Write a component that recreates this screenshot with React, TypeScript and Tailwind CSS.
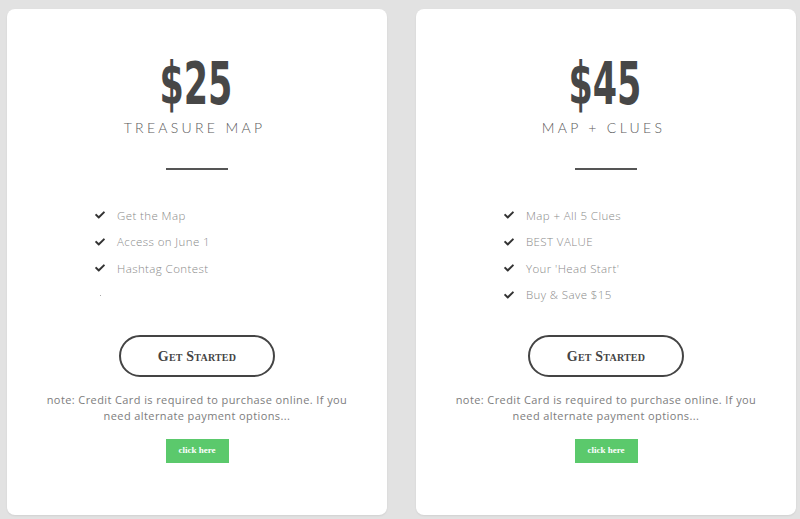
import React from 'react';
import { FaCheck } from 'react-icons/fa';

interface Plan {
  price: string;
  name: string;
  features: string[];
}

const plans: Plan[] = [
  { price: '$25', name: 'TREASURE MAP', features: ['Get the Map', 'Access on June 1', 'Hashtag Contest', ''] },
  { price: '$45', name: 'MAP + CLUES', features: ['Map + All 5 Clues', 'BEST VALUE', "Your 'Head Start'", 'Buy & Save $15'] },
];

function PlanCard({ plan }: { plan: Plan }) {
  return (
    <div className="w-[380px] h-[506px] shrink-0 bg-white rounded-[8px] shadow-[0_1px_2px_rgba(0,0,0,0.08)] flex flex-col items-center pt-[46px]">
      {/* price */}
      <div className="text-[58px] leading-[58px] font-bold text-[#474747] scale-x-[0.67] pr-[3px] font-['DejaVu_Sans_Condensed',sans-serif]">
        {plan.price}
      </div>
      <div className="mt-[7px] text-[14px] leading-[16px] font-light tracking-[3.3px] pr-[5px] text-[#5a5a5a] font-['Lato',sans-serif]">
        {plan.name}
      </div>
      <div className="mt-[32px] w-[62px] h-[2px] bg-[#555]" />

      <ul className="mt-[32px] self-stretch pl-[88px]">
        {plan.features.map((f, i) => (
          <li key={i} className="h-[26.5px] flex items-center gap-[12px]">
            {f ? (
              <FaCheck className="w-[10px] h-[10px] text-[#333]" />
            ) : (
              <span className="w-[10px] flex justify-center">
                <span className="w-[1px] h-[1px] bg-[#aaa] mt-[2px]" />
              </span>
            )}
            <span className="text-[11.5px] font-light tracking-[0.4px] text-[#8a8a8a] font-['Open_Sans',sans-serif]">{f}</span>
          </li>
        ))}
      </ul>

      <button className="mt-[27px] w-[156px] h-[42px] rounded-full border-2 border-[#444] text-[14px] tracking-[0.2px] font-bold text-[#444] [font-variant:small-caps] font-['Liberation_Serif',serif]">
        Get Started
      </button>

      <p className="mt-[15px] text-center text-[11px] leading-[16px] tracking-[0.4px] text-[#7d7d7d] whitespace-nowrap font-['Open_Sans',sans-serif]">
        note: Credit Card is required to purchase online. If you
        <br />
        need alternate payment options...
      </p>

      <button className="mt-[15px] w-[63px] h-[24px] bg-[#5bc96c] text-white text-[9px] font-bold font-['Liberation_Serif',serif]">
        click here
      </button>
    </div>
  );
}

export default function App() {
  return (
    <div className="w-[800px] h-[519px] bg-[#e2e2e2] flex gap-[29px] pl-[7px] pt-[9px] overflow-hidden">
      {plans.map((p) => (
        <PlanCard key={p.price} plan={p} />
      ))}
    </div>
  );
}
